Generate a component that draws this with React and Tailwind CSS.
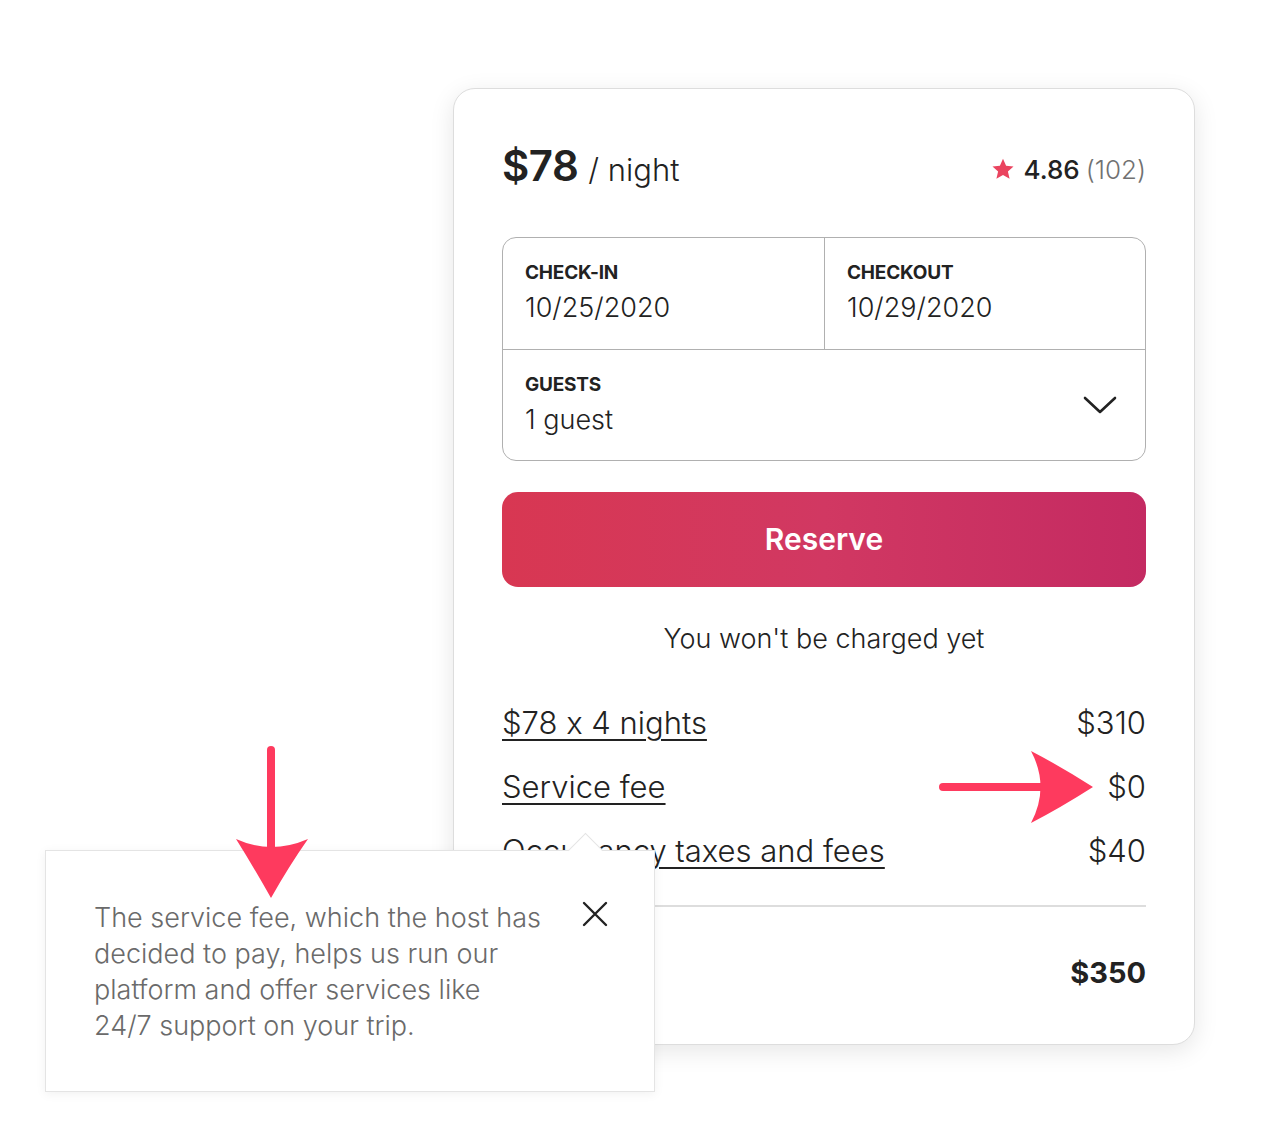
import { useState } from 'react'

const font = { fontFamily: 'Inter, "Noto Sans", sans-serif', fontFeatureSettings: '"calt" 0' }

export default function App() {
  const [guests] = useState('1 guest')

  return (
    <div className="relative w-[1273px] h-[1138px] bg-white overflow-hidden text-[#222222]" style={font}>
      <div className="pt-[88px] pl-[453px]">
        {/* Booking card */}
        <div className="w-[742px] rounded-[22px] border border-[#dddddd] bg-white shadow-[0_6px_24px_rgba(0,0,0,0.10)] px-[48px] pt-[47px] pb-[39px]">
          {/* Price + rating */}
          <div className="h-[58px] flex items-center justify-between">
            <div className="flex items-baseline gap-[10px]">
              <span className="text-[42px] font-semibold tracking-[-0.5px]">$78</span>
              <span className="text-[31px] font-light">/ night</span>
            </div>
            <div className="flex items-center gap-[6px] text-[26px] mt-[8px]">
              <svg width="24" height="24" viewBox="0 0 24 24" className="mr-[2px]">
                <path fill="#ea445f" d="M12 1.8l3.1 6.9 7.4.7-5.6 5 1.7 7.4L12 18l-6.6 3.8 1.7-7.4-5.6-5 7.4-.7z" />
              </svg>
              <span className="font-medium">4.86</span>
              <span className="text-[#717171] font-light">(102)</span>
            </div>
          </div>

          {/* Dates & guests */}
          <div className="mt-[43px] rounded-[14px] border-[1.5px] border-[#b0b0b0] overflow-hidden">
            <div className="grid grid-cols-2 h-[112px] border-b-[1.5px] border-[#b0b0b0]">
              <Field label="CHECK-IN" value="10/25/2020" />
              <div className="border-l-[1.5px] border-[#b0b0b0]">
                <Field label="CHECKOUT" value="10/29/2020" />
              </div>
            </div>
            <div className="h-[110px] flex justify-between pr-[28px]">
              <Field label="GUESTS" value={guests} />
              <svg width="34" height="20" viewBox="0 0 34 20" fill="none" className="self-center">
                <path d="M2 3l15 14L32 3" stroke="#222" strokeWidth="2.6" strokeLinecap="round" strokeLinejoin="round" />
              </svg>
            </div>
          </div>

          {/* Reserve */}
          <button className="mt-[31px] w-full h-[95px] rounded-[16px] bg-linear-to-r from-[#d83752] via-[#d13862] to-[#c42a62] text-white text-[30px] font-semibold">
            Reserve
          </button>

          <p className="mt-[36px] text-center text-[27px] font-light leading-[32px]">You won't be charged yet</p>

          {/* Price breakdown */}
          <div className="mt-[36px]">
            <Row label="$78 x 4 nights" amount="$310" />
            <Row label="Service fee" amount="$0" />
            <Row label="Occupancy taxes and fees" amount="$40" />
          </div>

          <div className="mt-[22px] border-t-2 border-[#dddddd]" />

          <div className="mt-[34px] h-[64px] flex items-center justify-end text-[29px] font-bold">
            <span>$350</span>
          </div>
        </div>
      </div>

      {/* Service fee popover */}
      <div className="absolute left-[45px] top-[850px] w-[610px] h-[242px] bg-white border border-[#e4e4e4] shadow-[0_2px_10px_rgba(0,0,0,0.06)]">
        <div className="absolute left-[527px] top-[-13px] w-[25px] h-[25px] rotate-45 bg-white border-l border-t border-[#e4e4e4]" />
        <div className="relative flex justify-between pl-[48px] pr-[46px] pt-[49px]">
          <p className="text-[27px] leading-[36px] text-[#6a6a6a] font-light whitespace-nowrap">
            The service fee, which the host has<br />
            decided to pay, helps us run our<br />
            platform and offer services like<br />
            24/7 support on your trip.
          </p>
          <svg width="26" height="26" viewBox="0 0 26 26" className="mt-[1px]">
            <path d="M2 2l22 22M24 2L2 24" stroke="#222" strokeWidth="2.4" strokeLinecap="round" />
          </svg>
        </div>
      </div>

      {/* Annotation arrows */}
      <svg className="absolute left-0 top-0 pointer-events-none" width="1273" height="1138">
        <line x1="943" y1="787" x2="1050" y2="787" stroke="#fe3a5e" strokeWidth="8" strokeLinecap="round" />
        <path fill="#fe3a5e" d="M1093 787 Q1060 766 1031 751 Q1050 787 1031 823 Q1060 808 1093 787 Z" />
        <line x1="271" y1="750" x2="271" y2="860" stroke="#fe3a5e" strokeWidth="8" strokeLinecap="round" />
        <path fill="#fe3a5e" d="M271 898 Q253 866 236 839 Q271 855 308 839 Q289 866 271 898 Z" />
      </svg>
    </div>
  )
}

function Field({ label, value }) {
  return (
    <div className="pl-[22px] pt-[24px]">
      <div className="text-[19px] font-bold leading-[22px] tracking-[-0.2px]">{label}</div>
      <div className="mt-[7px] text-[27px] font-light leading-[34px]">{value}</div>
    </div>
  )
}

function Row({ label, amount }) {
  return (
    <div className="h-[64px] flex items-center justify-between text-[31px] font-light">
      <span className="underline underline-offset-[5px] decoration-[1.5px]">{label}</span>
      <span>{amount}</span>
    </div>
  )
}
